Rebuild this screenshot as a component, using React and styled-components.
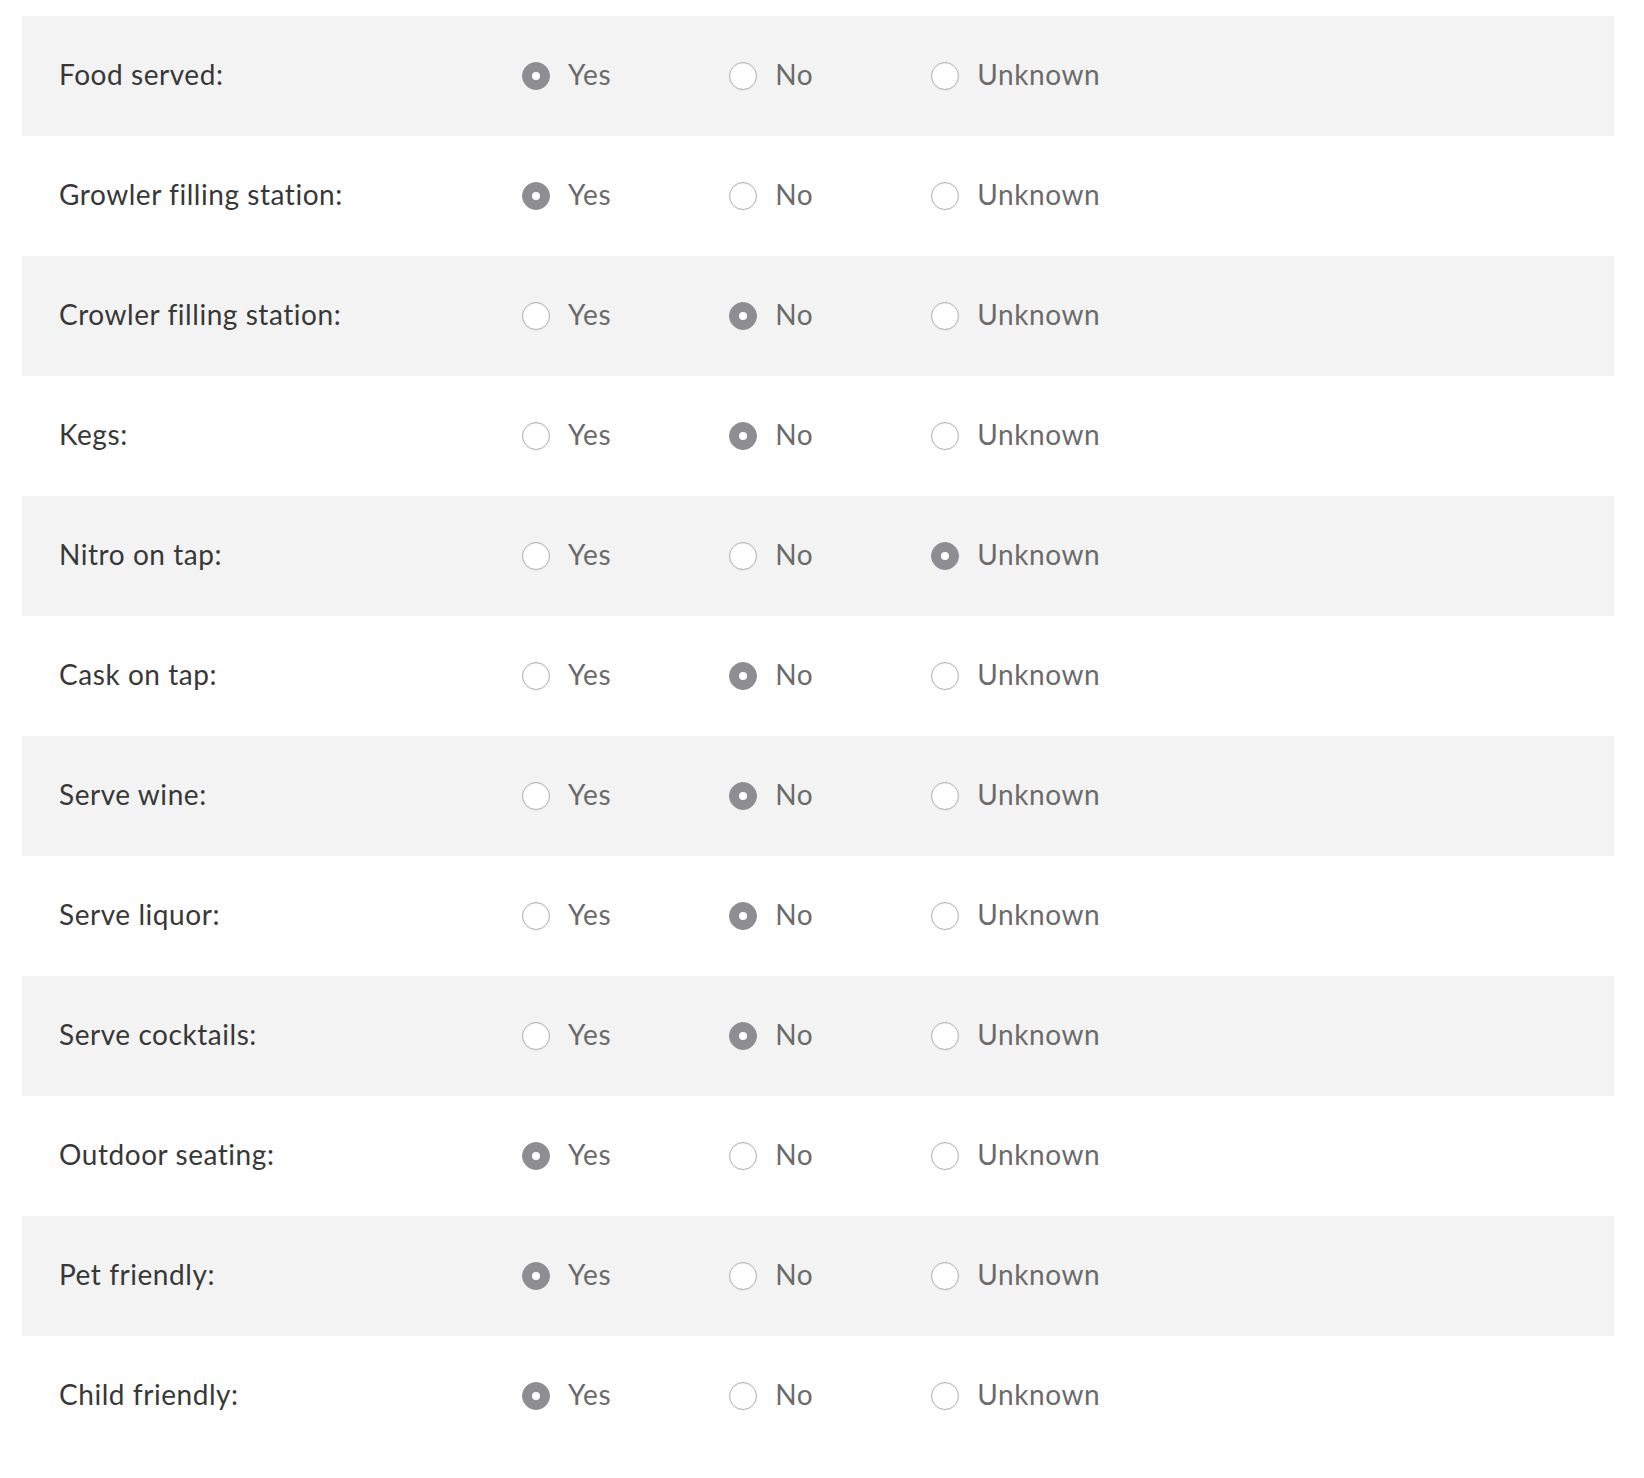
import React, { useState } from "react";
import styled, { createGlobalStyle } from "styled-components";

const GlobalStyle = createGlobalStyle`
  body {
    margin: 0;
    background: #fff;
    font-family: Lato, "Open Sans", sans-serif;
  }
`;

const Wrapper = styled.div`
  padding: 16px 30px 22px 22px;
`;

const Row = styled.div`
  display: grid;
  grid-template-columns: 463px 1fr;
  align-items: center;
  height: 120px;
  padding-left: 37px;
  background: ${(p) => (p.shaded ? "#f3f3f3" : "#fff")};
`;

const Label = styled.div`
  font-size: 28px;
  color: #383838;
  letter-spacing: 0.55px;
  padding-bottom: 4px;
`;

const Options = styled.div`
  display: flex;
  align-items: center;
`;

const Option = styled.label`
  display: flex;
  align-items: center;
  margin-right: 118px;
  cursor: pointer;
`;

const Radio = styled.span`
  box-sizing: border-box;
  flex: none;
  width: 28px;
  height: 28px;
  border-radius: 50%;
  display: flex;
  align-items: center;
  justify-content: center;
  margin-right: 18px;
  background: ${(p) => (p.checked ? "#8e8d92" : "#fff")};
  border: 1px solid ${(p) => (p.checked ? "#8e8d92" : "#b2b2b2")};
  box-shadow: ${(p) =>
    p.checked ? "none" : "inset 0 1px 2px rgba(0,0,0,0.08), 0 1px 0 rgba(0,0,0,0.04)"};

  &::after {
    content: "";
    display: ${(p) => (p.checked ? "block" : "none")};
    width: 8px;
    height: 8px;
    border-radius: 50%;
    background: #fff;
  }
`;

const OptionText = styled.span`
  font-size: 28px;
  color: #6b6b6b;
  letter-spacing: 0.6px;
  padding-bottom: 4px;
`;

const rows = [
  ["Food served:", "Yes"],
  ["Growler filling station:", "Yes"],
  ["Crowler filling station:", "No"],
  ["Kegs:", "No"],
  ["Nitro on tap:", "Unknown"],
  ["Cask on tap:", "No"],
  ["Serve wine:", "No"],
  ["Serve liquor:", "No"],
  ["Serve cocktails:", "No"],
  ["Outdoor seating:", "Yes"],
  ["Pet friendly:", "Yes"],
  ["Child friendly:", "Yes"],
];

const choices = ["Yes", "No", "Unknown"];

function AmenityRow({ label, initial, shaded }) {
  const [value, setValue] = useState(initial);
  return (
    <Row shaded={shaded}>
      <Label>{label}</Label>
      <Options>
        {choices.map((c) => (
          <Option key={c} onClick={() => setValue(c)}>
            <Radio checked={value === c} />
            <OptionText>{c}</OptionText>
          </Option>
        ))}
      </Options>
    </Row>
  );
}

export default function App() {
  return (
    <>
      <GlobalStyle />
      <Wrapper>
        {rows.map(([label, val], i) => (
          <AmenityRow key={label} label={label} initial={val} shaded={i % 2 === 0} />
        ))}
      </Wrapper>
    </>
  );
}
